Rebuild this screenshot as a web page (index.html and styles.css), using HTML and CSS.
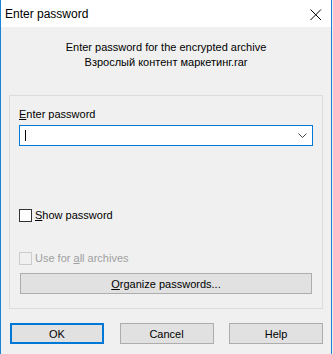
FILE: index.html
```html
<!DOCTYPE html>
<html>
<head>
<meta charset="utf-8">
<link rel="stylesheet" href="styles.css">
</head>
<body>
<div class="window">
  <div class="titlebar">
    <span class="title">Enter password</span>
    <svg class="close" width="12" height="12" viewBox="0 0 12 12"><path d="M0.5 0.5 L11 11 M11 0.5 L0.5 11" stroke="#000" stroke-width="1" fill="none"/></svg>
  </div>
  <div class="client">
    <div class="msg">
      <div>Enter password for the encrypted archive</div>
      <div>Взрослый контент маркетинг.rar</div>
    </div>
    <div class="group">
      <div class="label"><u>E</u>nter password</div>
      <div class="combo">
        <span class="caret"></span>
        <svg class="chev" width="9" height="6" viewBox="0 0 9 6"><path d="M0.5 0.5 L4.5 4.5 L8.5 0.5" stroke="#444" stroke-width="1" fill="none"/></svg>
      </div>
      <div class="check show"><span class="box"></span><span><u>S</u>how password</span></div>
      <div class="check disabled"><span class="box"></span><span>Use for <u>a</u>ll archives</span></div>
      <div class="btn wide"><span><u>O</u>rganize passwords...</span></div>
    </div>
    <div class="buttons">
      <div class="btn default">OK</div>
      <div class="btn">Cancel</div>
      <div class="btn">Help</div>
    </div>
  </div>
</div>
</body>
</html>
```

FILE: styles.css
```css
html, body {
  margin: 0;
  padding: 0;
  background: #f0f0f0;
}
body {
  width: 333px;
  height: 354px;
  overflow: hidden;
  font-family: "Liberation Sans", Arial, sans-serif;
  font-size: 11px;
  color: #000;
}
.window {
  width: 330px;
  height: 354px;
  border-left: 1px solid #1883d7;
  border-right: 1px solid #1883d7;
  background: #f0f0f0;
  display: flex;
  flex-direction: column;
}
.titlebar {
  height: 27px;
  background: #fff;
  display: flex;
  align-items: center;
  justify-content: space-between;
  flex: none;
}
.title {
  font-size: 12px;
  padding-left: 4px;
  margin-top: 1px;
}
.close {
  margin-right: 9px;
  margin-top: 2px;
}
.client {
  padding-top: 13px;
  display: flex;
  flex-direction: column;
}
.msg {
  text-align: center;
  line-height: 15px;
}
.group {
  margin: 25px 8px 0 8px;
  border: 1px solid #dcdcdc;
  padding: 12px 9px 14px 9px;
  display: flex;
  flex-direction: column;
}
.label {
  line-height: 13px;
}
u {
  text-decoration: underline;
  text-underline-offset: 1px;
}
.combo {
  margin-top: 4px;
  height: 19px;
  border: 1px solid #0078d7;
  background: #fff;
  display: flex;
  align-items: center;
  justify-content: space-between;
  padding: 0 5px 0 5px;
}
.caret {
  width: 1px;
  height: 11px;
  background: #000;
}
.chev {
  margin-top: 1px;
}
.check {
  display: flex;
  align-items: center;
  gap: 3px;
  height: 13px;
  line-height: 13px;
}
.check .box {
  width: 11px;
  height: 11px;
  border: 1px solid #333;
  background: #fff;
  flex: none;
}
.check.show {
  margin-top: 63px;
}
.check.disabled {
  margin-top: 30px;
  color: #a0a0a0;
}
.check.disabled .box {
  border-color: #cccccc;
  background: #f0f0f0;
}
.btn {
  height: 19px;
  border: 1px solid #adadad;
  background: #e1e1e1;
  display: flex;
  align-items: center;
  justify-content: center;
  box-sizing: content-box;
}
.btn.wide {
  margin-top: 8px;
  margin-left: 1px;
  margin-right: 1px;
}
.buttons {
  margin: 14px 8px 0 9px;
  display: flex;
  justify-content: space-between;
}
.buttons .btn {
  width: 92px;
}
.buttons .btn.default {
  border: 2px solid #0078d7;
  height: 17px;
  width: 90px;
}
```
